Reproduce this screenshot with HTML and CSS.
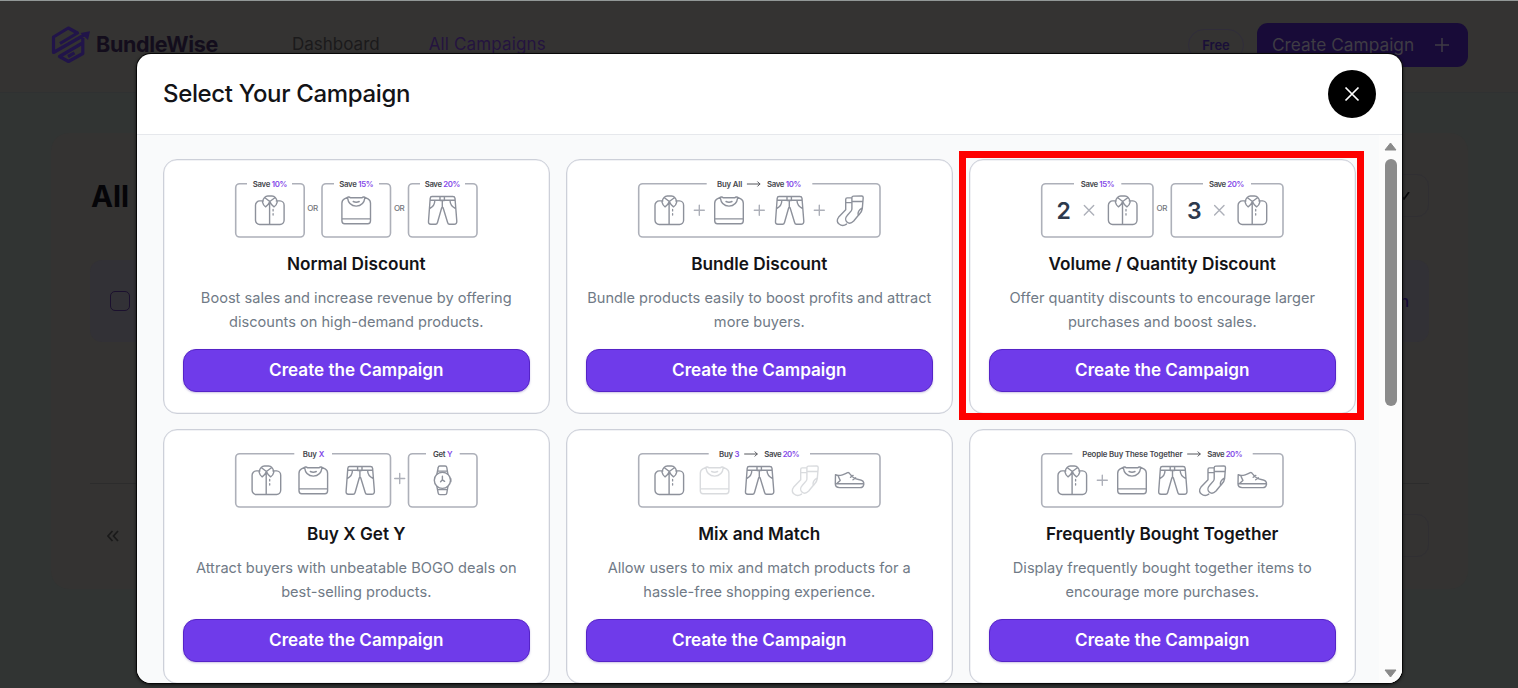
FILE: index.html
```html
<!DOCTYPE html>
<html lang="en">
<head>
<meta charset="utf-8">
<title>BundleWise</title>
<link rel="stylesheet" href="styles.css">
</head>
<body>
<svg class="defs" aria-hidden="true">
  <symbol id="shirt" overflow="visible"><path d="M8.5 5.6H5a4.3 4.3 0 0 0-4.3 4.3V25A4.2 4.2 0 0 0 5 29.2H25.2A4.2 4.2 0 0 0 29.3 25V9.9A4.3 4.3 0 0 0 25.2 5.6H21.5M14.8 6V29M9.8 2.2Q11.2.7 13 .7H17.2Q19.2.7 20.4 2.2L15 6.2ZM9.8 2.2Q8 4 7.7 6.8Q8.5 10.2 10.8 11.6Q13.5 9.8 15 6.2Q16.5 9.8 19.2 11.6Q21.7 10.2 22.4 6.8Q22.2 4 20.4 2.2"/><path class="dots" d="M18.3 14.2v1.4M18.3 18.4v1.4"/></symbol>
  <symbol id="sweater" overflow="visible"><path d="M7.2 1.7L3.2 3.6Q.7 5 .7 8V25.4Q.7 28.4 3.4 28.4H26.6Q29.3 28.4 29.3 25.4V8Q29.3 5 26.8 3.6L22.8 1.7Q21.5 1.5 20.8 2.5H9.2Q8.5 1.5 7.2 1.7ZM6.2 2.1C7 7.8 10.6 10.8 15 10.8S23 7.8 23.8 2.1M12 6.2Q15 7.7 18 6.2M.7 23.6H29.3"/></symbol>
  <symbol id="pants" overflow="visible"><path d="M4.2 1.2H25Q27 1.2 27.2 3L29 26Q29.1 29 26.3 29H21.7Q20.2 29 19.8 27.2L15.3 12.5Q14.6 11.2 13.9 12.5L9.7 27.2Q9.2 29 7.8 29H3Q.4 29 .7 26L2.4 3Q2.6 1.2 4.2 1.2ZM2.3 5H27.2M12.2 1.2V5.2H16.6V1.2M14.5 5.2V12M7 5.3C7 9.7 5 11.8 1.9 13.2M22.2 5.3C22.3 9.7 24.5 11.8 27.8 13.2"/></symbol>
  <symbol id="socks" overflow="visible"><path d="M15.2 2.2Q15.3.8 16.8.8L25 .7Q26.5.7 26.5 2.4L25.6 13.3C25.4 16.5 24 17.7 21.7 20L17 25.7C11.8 31 6.2 24.8 10.5 20.2L14.5 15.6Q15.2 14.7 15.2 13.5ZM15.3 6.2H26.2M25.6 12.5Q20.4 15.5 21.5 20M15.2 2.6H10.5Q9 2.6 9 4.3V14.5L2 21.8C-2.6 27.6 5 32.2 9.8 28.8M9 7.3H15"/></symbol>
  <symbol id="shoe" overflow="visible"><path d="M1 8.8C3.3 10.3 5.8 9.7 8 9C11 8 11.6 7.4 13.2 6.8Q14.5 6.6 15.4 8Q19 13 24 13.7C27.8 14.2 29.7 15.3 29.3 18.5Q28.7 21.8 25.5 21.8H5C2.2 21.8.8 20.5.8 18ZM.8 18H29.3M3.5 10L5.7 14.6 2.6 17.5M16 11.5L18.6 9.6M18.5 14L21.2 12"/></symbol>
  <symbol id="watch" overflow="visible"><circle cx="9" cy="15" r="8.1"/><path d="M3.5 8.8L4.8 2.2Q5 .7 6.5.7H11.7Q13.2.7 13.4 2.2L14.5 8.8M3.5 21.2L4.8 27.8Q5 29.3 6.5 29.3H11.7Q13.2 29.3 13.4 27.8L14.5 21.2M5 5.8H13.2M5 24.3H13.2M17.4 13.5V16.5M9 11V14.5L7.2 16.5M9 14.5L11.2 16"/></symbol>
  <symbol id="plus" overflow="visible"><path class="op" d="M-5 0H5M0-5V5"/></symbol>
  <symbol id="times" overflow="visible"><path class="op" d="M-4.7-4.7L4.7 4.7M4.7-4.7L-4.7 4.7"/></symbol>
  <symbol id="arrow" overflow="visible"><path class="arrow" d="M0 0H12.6M10.4-2.2L12.6 0L10.4 2.2"/></symbol>
</svg>

<header class="topbar">
  <div class="brand">
    <svg class="logo" width="40" height="40" viewBox="0 0 40 40"><path d="M9 18.5L26.5 8L17.3 3L2.5 12V27.5L34 9.5M31.8 13V28.5L17.5 36.5L8.5 31.5L31.5 18M17 31.5L23.5 27.8"/><path class="tip" d="M29.5 8L39 6.2L37 15Z"/></svg>
    <span class="brand-name">BundleWise</span>
  </div>
  <nav class="links"><span>Dashboard</span><span class="active">All Campaigns</span></nav>
  <span class="plan">Free</span>
  <div class="create">Create Campaign<svg width="14" height="14" viewBox="0 0 14 14"><path d="M0 7H14M7 0V14"/></svg></div>
</header>

<main class="panel">
  <div class="panel-head"><h1>All</h1><div class="select"><svg width="12" height="8" viewBox="0 0 12 8"><path d="M1 1L6 7L11 0"/></svg></div></div>
  <div class="row"><span class="check"></span><span class="row-end">Action</span></div>
  <div class="pager"><svg width="12" height="12" viewBox="0 0 12 12"><path d="M5.5 1L1 6L5.5 11M11 1L6.5 6L11 11"/></svg><div class="select page-size"></div></div>
</main>

<section class="modal">
  <header class="modal-head">
    <h2>Select Your Campaign</h2>
    <button class="close"><svg width="16" height="16" viewBox="0 0 16 16"><path d="M1.5 1.5L14.5 14.5M14.5 1.5L1.5 14.5"/></svg></button>
  </header>
  <div class="modal-body">
    <div class="grid">
      <article class="card">
        <svg class="art" width="249" height="66" viewBox="0 0 249 66">
          <rect class="frame" x="3.7" y="9.7" width="68.5" height="53.3" rx="4"/><rect class="frame" x="90" y="9.7" width="68.5" height="53.3" rx="4"/><rect class="frame" x="176.5" y="9.7" width="68.5" height="53.3" rx="4"/>
          <rect class="gap" x="15" y="6" width="45" height="7"/><rect class="gap" x="102" y="6" width="45" height="7"/><rect class="gap" x="188" y="6" width="45" height="7"/>
          <text x="20.7" y="12.7" textLength="34.7">Save <tspan class="v">10%</tspan></text><text x="107.3" y="12.7" textLength="34.3">Save <tspan class="v">15%</tspan></text><text x="192.7" y="12.7" textLength="35.6">Save <tspan class="v">20%</tspan></text>
          <text class="or" x="75.3" y="36.5" textLength="10.8">OR</text><text class="or" x="162" y="36.5" textLength="10.8">OR</text>
          <use href="#shirt" x="22.8" y="21.3"/><use href="#sweater" x="109.2" y="21.3"/><use href="#pants" x="195.8" y="21.3"/>
        </svg>
        <h3>Normal Discount</h3>
        <p>Boost sales and increase revenue by offering<br>discounts on high-demand products.</p>
        <button class="cta">Create the Campaign</button>
      </article>
      <article class="card">
        <svg class="art" width="249" height="66" viewBox="0 0 249 66">
          <rect class="frame" x="3.7" y="9.7" width="241.3" height="53.3" rx="4"/><rect class="gap" x="71.7" y="6" width="105.6" height="7"/>
          <text x="82" y="12.7" textLength="25.3">Buy All</text><use href="#arrow" x="112.3" y="10"/><text x="132" y="12.7" textLength="34.3">Save <tspan class="v">10%</tspan></text>
          <use href="#shirt" x="19.3" y="21.3"/><use href="#plus" x="64.3" y="36.3"/><use href="#sweater" x="79" y="21.3"/><use href="#plus" x="124.3" y="36.3"/><use href="#pants" x="139.8" y="21.3"/><use href="#plus" x="184.3" y="36.3"/><use href="#socks" x="201.7" y="21.3"/>
        </svg>
        <h3>Bundle Discount</h3>
        <p>Bundle products easily to boost profits and attract<br>more buyers.</p>
        <button class="cta">Create the Campaign</button>
      </article>
      <article class="card marked">
        <svg class="art" width="249" height="66" viewBox="0 0 249 66">
          <rect class="frame" x="3.7" y="9.7" width="111.3" height="53.3" rx="4"/><rect class="frame" x="133.3" y="9.7" width="111.7" height="53.3" rx="4"/>
          <rect class="gap" x="36" y="6" width="47.3" height="7"/><rect class="gap" x="165" y="6" width="48" height="7"/>
          <text x="42.7" y="12.7" textLength="34">Save <tspan class="v">15%</tspan></text><text x="171" y="12.7" textLength="35.3">Save <tspan class="v">20%</tspan></text>
          <text class="num" x="18.6" y="45">2</text><use href="#times" x="51" y="36.3"/><use href="#shirt" x="69.7" y="21.3"/>
          <text class="or" x="118.6" y="36.5" textLength="10.8">OR</text>
          <text class="num" x="149" y="45">3</text><use href="#times" x="181.3" y="36.3"/><use href="#shirt" x="199.4" y="21.3"/>
        </svg>
        <h3>Volume / Quantity Discount</h3>
        <p>Offer quantity discounts to encourage larger<br>purchases and boost sales.</p>
        <button class="cta">Create the Campaign</button>
      </article>
      <article class="card">
        <svg class="art" width="249" height="66" viewBox="0 0 249 66">
          <rect class="frame" x="3.7" y="9.7" width="154.8" height="53.3" rx="4"/><rect class="frame" x="176.5" y="9.7" width="68.5" height="53.3" rx="4"/>
          <rect class="gap" x="62.3" y="6" width="37.7" height="7"/><rect class="gap" x="194" y="6" width="33.7" height="7"/>
          <text x="70.7" y="12.7" textLength="21.6">Buy <tspan class="v">X</tspan></text><text x="201" y="12.7" textLength="19.5">Get <tspan class="v">Y</tspan></text>
          <use href="#shirt" x="19.4" y="21.3"/><use href="#sweater" x="66.3" y="21.3"/><use href="#pants" x="113.4" y="21.3"/><use href="#plus" x="167.7" y="34.5"/><use href="#watch" x="201.4" y="21.3"/>
        </svg>
        <h3>Buy X Get Y</h3>
        <p>Attract buyers with unbeatable BOGO deals on<br>best-selling products.</p>
        <button class="cta">Create the Campaign</button>
      </article>
      <article class="card">
        <svg class="art" width="249" height="66" viewBox="0 0 249 66">
          <rect class="frame" x="3.7" y="9.7" width="241.3" height="53.3" rx="4"/><rect class="gap" x="73.7" y="6" width="101.3" height="7"/>
          <text x="84" y="12.7" textLength="20.5">Buy <tspan class="v">3</tspan></text><use href="#arrow" x="109.6" y="10"/><text x="129.3" y="12.7" textLength="35.4">Save <tspan class="v">20%</tspan></text>
          <use href="#shirt" x="19.3" y="21.3"/><use class="faded" href="#sweater" x="64.6" y="21.3"/><use href="#pants" x="109.8" y="21.3"/><use class="faded" href="#socks" x="156.7" y="21.3"/><use href="#shoe" x="199.5" y="21.8"/>
        </svg>
        <h3>Mix and Match</h3>
        <p>Allow users to mix and match products for a<br>hassle-free shopping experience.</p>
        <button class="cta">Create the Campaign</button>
      </article>
      <article class="card">
        <svg class="art" width="249" height="66" viewBox="0 0 249 66">
          <rect class="frame" x="3.7" y="9.7" width="241.3" height="53.3" rx="4"/><rect class="gap" x="34.3" y="6" width="180.4" height="7"/>
          <text x="44.3" y="12.7" textLength="100.2">People Buy These Together</text><use href="#arrow" x="149.6" y="10"/><text x="169.3" y="12.7" textLength="35.4">Save <tspan class="v">20%</tspan></text>
          <use href="#shirt" x="19.3" y="21.3"/><use href="#plus" x="64.3" y="36.3"/><use href="#sweater" x="79" y="21.3"/><use href="#pants" x="120" y="21.3"/><use href="#socks" x="161" y="21.3"/><use href="#shoe" x="199.2" y="21.8"/>
        </svg>
        <h3>Frequently Bought Together</h3>
        <p>Display frequently bought together items to<br>encourage more purchases.</p>
        <button class="cta">Create the Campaign</button>
      </article>
    </div>
    <div class="scrollbar">
      <svg width="13" height="9" viewBox="0 0 13 9"><path d="M6.5 1L12 8H1Z"/></svg>
      <span class="thumb"></span>
      <svg class="down" width="13" height="9" viewBox="0 0 13 9"><path d="M6.5 8L12 1H1Z"/></svg>
    </div>
  </div>
</section>
</body>
</html>
```

FILE: styles.css
```css
* { box-sizing: border-box; }
body { margin: 0; height: 688px; overflow: hidden; background: #313433; font-family: Inter, "Liberation Sans", sans-serif; }
svg { display: block; fill: none; flex: none; }
.defs { display: none; }
h1, h2, h3, p { margin: 0; }
button { font-family: inherit; border: 0; padding: 0; }

.topbar { height: 93px; border-top: 1px solid #929897; border-bottom: 1px solid #2f3132; background: #343332; display: flex; align-items: flex-start; padding: 0 50px 0 51px; white-space: nowrap; }
.brand { display: flex; width: 241px; padding-top: 24px; gap: 5px; }
.logo { stroke: #21144a; stroke-width: 3.2; stroke-linejoin: round; }
.logo .tip { fill: #21144a; stroke: none; }
.brand-name { font-size: 21.5px; line-height: 39px; font-weight: 700; color: #130d1c; letter-spacing: -.3px; }
.links { display: flex; gap: 49px; flex: 1; font-size: 17px; line-height: 26px; padding-top: 29.5px; color: #1b1a1b; }
.links .active { color: #24143f; letter-spacing: .15px; }
.plan { margin: 28px 13px 0 0; width: 56px; height: 32px; border: 1px solid #302d3a; border-radius: 16px; text-align: center; font-size: 13px; line-height: 30px; font-weight: 600; color: #190f38; }
.create { margin-top: 22px; width: 211px; height: 44px; border-radius: 11px; background: #180b38; color: #3f3c44; font-size: 17.3px; line-height: 44px; display: flex; align-items: center; justify-content: space-between; padding: 0 19px 0 15px; }
.create svg { stroke: #3f3c44; stroke-width: 1.5; }

.panel { margin: 40px 50px 0 51px; height: 456px; border-radius: 18px; background: #343332; padding: 41px 39px 0; }
.panel-head { display: flex; justify-content: space-between; height: 86px; padding-left: 1px; }
h1 { color: #050508; font-size: 29.5px; line-height: 44px; font-weight: 700; }
.select { width: 90px; height: 43px; border: 1px solid #302f32; border-radius: 12px; padding: 17px 18px; display: flex; justify-content: flex-end; }
.select svg { stroke: #08080a; stroke-width: 1.7; }
.row { height: 82px; border-radius: 12px; background: #323136; display: flex; justify-content: space-between; align-items: center; padding: 0 20px 1px; }
.check { width: 20px; height: 20px; border: 1.5px solid #1b102e; border-radius: 5px; }
.row-end { font-size: 16px; color: #160b35; font-weight: 500; line-height: 20px; }
.pager { margin-top: 141px; border-top: 1px solid #2c2c2c; padding: 30px 0 0 17px; display: flex; justify-content: space-between; align-items: flex-start; }
.pager > svg { margin-top: 16px; stroke: #1a1a1a; stroke-width: 1.7; }

.modal { position: absolute; left: 137px; top: 54px; width: 1264.5px; height: 629px; border-radius: 14px; background: #fff; overflow: hidden; box-shadow: 0 0 0 1px #080808, 0 1px 3px 1px #111; }
.modal-head { height: 80.5px; border-bottom: 1px solid #e6e8ec; display: flex; align-items: center; justify-content: space-between; padding: 0 25.7px 0 26px; }
h2 { font-size: 24px; line-height: 32px; font-weight: 500; color: #131316; letter-spacing: -.35px; }
.close { width: 48px; height: 48px; border-radius: 50%; background: #000; display: grid; place-items: center; }
.close svg { stroke: #fff; stroke-width: 1.7; }
.modal-body { height: 548.5px; background: #f9fafb; display: flex; justify-content: space-between; padding-left: 25.5px; }
.grid { display: grid; grid-template-columns: repeat(3, 387.5px); grid-auto-rows: 254.5px; gap: 15.5px; padding-top: 24.5px; }
.card { position: relative; background: #fff; border: 1px solid #cdd0d9; box-shadow: inset 0 0 0 .5px #e3e5eb; border-radius: 14px; padding: 14px 18.5px 0; display: flex; flex-direction: column; align-items: center; text-align: center; }
.marked::after { content: ""; position: absolute; inset: -9px -9px -7px -10.5px; border: 7px solid #fe0000; }
h3 { margin-top: 11px; font-size: 17.2px; line-height: 26px; font-weight: 570; color: #131316; white-space: nowrap; }
.card p { margin-top: 9px; font-size: 14.6px; line-height: 24.4px; color: #707a86; white-space: nowrap; }
.cta { margin-top: 14.2px; width: 347.5px; height: 43px; flex: none; border-radius: 13px; border: 1.5px solid #5523c7; background: #6f3bea; color: #fff; font-size: 17.1px; line-height: 40px; font-weight: 570; padding-bottom: 1px; box-shadow: 0 1px 2px #9c8bcb80; }

.art { stroke: #8d919b; stroke-width: 1.4; stroke-linejoin: round; stroke-linecap: round; }
.art text { stroke: none; fill: #45464c; font-size: 7.8px; font-weight: 600; }
.art .v { fill: #8348e8; }
.art .or { fill: #74767c; font-size: 8px; font-weight: 500; }
.art .num { fill: #2d394d; font-size: 23px; font-weight: 600; }
.frame { stroke: #adb0b9; stroke-width: 1.6; }
.art .gap { fill: #fff; stroke: none; }
.op { stroke: #adb0b9; stroke-width: 1.4; }
.arrow { stroke: #55565c; stroke-width: 1; }
.dots { stroke-width: 1.3; }
.faded { opacity: .33; }

.scrollbar { width: 23px; padding: 7px 5px 5px 0; background: #fcfcfc; display: flex; flex-direction: column; align-items: flex-end; }
.scrollbar svg { fill: #8a8a8a; stroke: #8a8a8a; stroke-linejoin: round; }
.thumb { margin-top: 8px; width: 12px; height: 247px; border-radius: 6px; background: #8b8b8b; }
.down { margin-top: auto; }
```
